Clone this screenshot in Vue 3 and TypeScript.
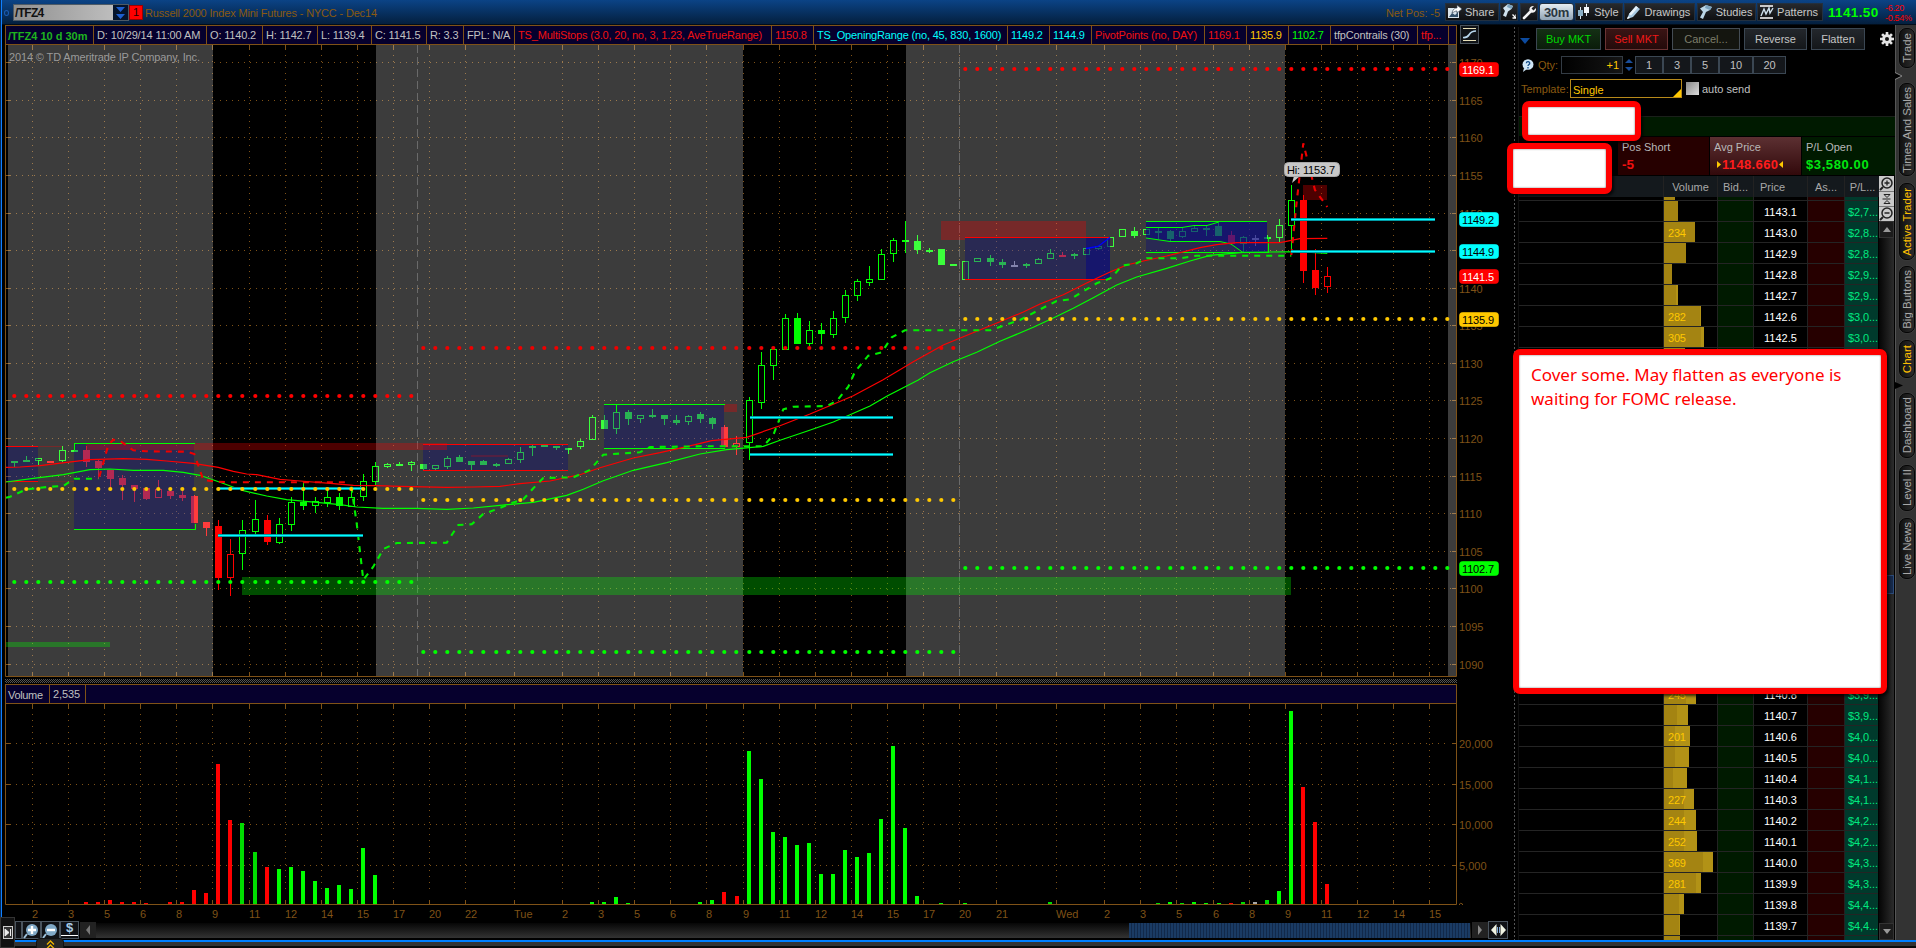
<script setup lang="ts">
type Kind = 'g' | 'G' | 'r' | 'R' | 'n'
interface Candle { x: number; h: number; t: number; b: number; l: number; hollow: boolean; color: string }

// Lower case = filled, upper case = hollow, n = neutral. Vertical values are thirds of a pixel from the base.
const COLORS: Record<Kind, string> = { g: '#00ff00', G: '#00ff00', r: '#ff0000', R: '#ff0000', n: '#a8a8a8' }
const third = (base: number, v: number) => Math.round(base + v / 3)
function parse(base: number, src: string): Candle[] {
  return src.split('|').map((row) => {
    const [x, h, t, b, l, k] = row.trim().split(' ')
    return {
      x: +x, h: third(base, +h), t: third(base, +t), b: third(base, +b), l: third(base, +l),
      hollow: k === 'G' || k === 'R', color: COLORS[k as Kind],
    }
  })
}
const candles: Candle[] = [
  ...parse(380, '14 243 243 249 261 g|26 228 240 246 246 g|38 234 234 243 255 G|50 243 243 249 249 r|62 198 210 243 246 G|74 198 210 216 216 g|86 198 210 246 261 r|98 240 243 264 297 r|110 270 270 297 327 r|122 285 294 315 360 r|134 315 315 327 366 r|146 324 324 357 360 r|158 300 327 354 354 R|170 333 333 348 357 r|182 333 345 354 363 r|194 345 348 429 429 r|206 426 426 444 468 r|218 420 438 594 630 r|230 477 522 595 648 R|242 420 450 522 570 G|255 360 417 456 465 G|267 405 420 486 495 r|279 414 432 489 492 G|291 351 366 435 453 G|303 306 366 378 390 g|315 351 363 378 399 G|327 324 351 369 381 G|339 339 351 378 390 g|351 321 351 381 381 G|363 282 303 351 363 G|375 246 258 306 315 G|387 249 252 261 264 G|399 246 252 258 258 g|411 243 246 255 273 G|423 252 252 267 270 g|435 255 255 267 270 G|447 228 234 262 267 G|459 225 231 246 246 g|471 243 243 255 270 g|483 240 243 255 255 g|496 249 252 258 261 g'),
  ...parse(380, '508 234 237 252 252 G|520 201 216 240 249 G|532 195 198 204 228 g|544 195 195 201 201 g|556 198 198 204 210 g|568 204 204 210 222 g|580 177 183 201 207 G|592 105 111 180 180 G|604 105 120 147 147 g|616 75 96 147 162 G|628 90 96 117 135 g|640 105 105 117 129 G|652 87 105 111 114 g|664 105 105 117 135 g|676 105 120 129 135 g|688 105 108 126 135 G|700 96 102 117 129 g|712 111 114 132 147 g|724 135 141 201 201 r|736 168 189 201 225 R|749 51 60 189 240 G'),
  ...parse(200, '761 456 495 609 627 G|773 447 447 498 540 G|785 342 354 450 450 G|797 339 354 432 432 g|809 363 390 432 438 G|821 369 390 402 432 g|833 333 354 405 414 G|845 270 285 354 369 G|857 237 243 288 303 G|869 198 237 249 258 G|881 147 162 240 240 G|893 114 120 162 186 G|905 63 120 126 159 g|917 105 123 150 162 g|929 144 150 156 159 g|941 147 147 195 195 g|953 192 192 198 198 g|965 183 183 240 240 G|977 174 174 186 186 G|990 165 174 186 198 g|1002 177 186 195 204 g|1014 183 195 201 201 n|1026 189 192 198 204 g|1038 174 177 192 192 G|1050 147 159 177 177 G|1062 156 165 171 171 r|1074 159 162 168 177 g|1086 144 144 165 165 G|1098 138 138 147 150 G|1110 111 111 141 141 G|1122 87 87 111 111 G|1134 81 93 108 114 g'),
  ...parse(130, '1146 297 297 315 315 G|1158 291 303 309 327 g|1170 300 303 327 333 g|1182 291 303 320 324 G|1194 285 294 306 306 G|1206 285 294 300 318 g|1218 279 288 318 318 g|1231 303 315 342 345 r|1243 318 321 342 366 G|1255 315 324 330 348 n|1267 315 321 327 327 g|1279 267 285 324 336 G|1291 165 210 288 375 G|1303 195 210 423 459 r|1315 357 420 474 495 r|1327 411 438 471 489 R'),
]

const line = (segs: [number, number, string][]) =>
  segs.map(([ox, oy, s]) => s.trim().split(' ').map((p) => {
    const [x, y] = p.split(',').map(Number)
    return `${(ox + x / 3).toFixed(1)},${(oy + y / 3).toFixed(1)}`
  }).join(' ')).join(' ')

const redAvg = line([
  [0, 380, '18,262 60,261 120,257 200,247 270,239 370,236 440,238 500,243 580,250 655,262 700,274 740,282 770,284 840,298 900,303 1000,311 1060,316 1130,317 1200,319 1340,322 1420,321 1500,319'],
  [500, 380, '60,311 150,303 240,284 300,263 400,234 480,218 560,200 635,182 740,172 840,137 930,102 1000,73 1060,47 1148,0'],
  [700, 200, '640,485 730,435 830,394 900,365 970,336 1020,312 1090,284 1160,249 1230,216 1280,195 1330,183 1400,168 1500,143'],
  [1100, 130, '350,344 410,338 540,338 600,326 682,325'],
])
const greenAvg = line([
  [0, 380, '18,306 100,295 190,284 270,269 330,267 400,271 490,271 550,277 600,286 660,307 730,332 800,348 860,359 950,367 1020,374 1070,381 1150,385 1250,385 1340,388 1420,384 1500,376'],
  [500, 380, '100,367 200,346 250,328 310,302 400,271 500,248 600,222 680,209 790,199 840,181 920,154 1000,126 1050,104 1110,78 1160,49 1255,0'],
  [700, 200, '690,518 760,485 830,457 900,424 1000,382 1060,354 1120,325 1180,293 1250,255 1310,231 1400,205'],
  [1100, 130, '270,393 330,376 430,367 600,365 682,370'],
])
const greenStops = [
  line([[0, 380, '18,353 30,350 80,328 150,320 190,318 223,296 295,296']]),
  line([
    [0, 380, '1054,320 1070,430 1090,600 1120,560 1150,507 1190,489 1340,488 1375,435 1415,433 1450,402 1500,384'],
    [500, 380, '35,369 70,358 100,325 130,294 220,292 270,270 310,224 420,217 450,201 600,199 790,199 820,165 850,88 880,80 980,78'],
    [700, 200, '410,603 445,560 465,515 505,467 545,457 575,412 615,391 870,391 960,360 1030,323 1070,303 1110,298 1190,250 1235,233 1265,197 1310,190'],
    [1100, 130, '140,385 240,385 290,377 574,377'],
  ]),
]
const redStops = [
  line([[0, 380, '298,290 325,195 340,179 360,182 400,211 440,214 560,215 583,222 610,300 655,305 690,307 1050,307']]),
  line([[1100, 130, '574,375 590,215 610,40 645,180 682,231']]),
]

const timeAxis: [number, string][] = [
  [32, '2'], [68, '3'], [104, '5'], [140, '6'], [176, '8'], [212, '9'], [249, '11'], [285, '12'], [321, '14'], [357, '15'], [393, '17'], [429, '20'], [465, '22'],
  [514, 'Tue'], [562, '2'], [598, '3'], [634, '5'], [670, '6'], [706, '8'], [743, '9'], [779, '11'], [815, '12'], [851, '14'], [887, '15'], [923, '17'], [959, '20'], [996, '21'],
  [1056, 'Wed'], [1104, '2'], [1140, '3'], [1176, '5'], [1213, '6'], [1249, '8'], [1285, '9'], [1321, '11'], [1357, '12'], [1393, '14'], [1429, '15'],
]
const priceAxis: [number, number][] = [[62, 1170], [100, 1165], [137, 1160], [175, 1155], [213, 1150], [250, 1145], [288, 1140], [325, 1135], [363, 1130], [400, 1125], [438, 1120], [476, 1115], [513, 1110], [551, 1105], [588, 1100], [626, 1095], [664, 1090]]
const volAxis: [number, string][] = [[743, '20,000'], [784, '15,000'], [824, '10,000'], [865, '5,000']]
const tags: [number, string, string, string][] = [
  [62, '1169.1', '#ff0000', '#fff'], [212, '1149.2', '#00ffff', '#000'], [244, '1144.9', '#00ffff', '#000'],
  [269, '1141.5', '#ff0000', '#fff'], [312, '1135.9', '#ffc800', '#000'], [561, '1102.7', '#00ff00', '#000'],
]

const slots = candles.map((c) => c.x).concat([1339, 1351, 1363, 1375, 1387, 1399, 1411, 1423, 1435, 1447])
const pivots = ([
  [14, 411, 396, '#ff0000'], [423, 953, 348, '#f00000'], [965, 1447, 69, '#ff0000'],
  [14, 411, 489, '#ffc800'], [423, 953, 500, '#ffc800'], [965, 1447, 319, '#ffc800'],
  [14, 411, 582, '#00ff00'], [423, 953, 652, '#00ff00'], [965, 1447, 568, '#00ff00'],
] as [number, number, number, string][]).flatMap(([a, b, y, color]) => slots.filter((x) => x >= a && x <= b).map((x) => ({ x, y, color })))

const volumes = '86 696 r|98 696 r|110 690 r|122 696 r|134 696 r|146 699 r|170 696 r|182 696 r|194 660 r|206 669 r|218 282 r|230 450 r|242 459 d|255 546 d|267 591 r|279 597 g|291 591 g|303 603 g|315 633 g|327 654 g|339 645 g|351 657 g|363 534 g|375 615 g|592 696 g|604 696 g|616 681 g|628 699 g|700 696 g|712 690 g|724 666 r|737 678 r|749 243 g|761 327 g|773 486 g|785 501 g|797 525 g|809 519 g|821 612 g|833 612 g|845 540 g|857 561 g|869 549 g|881 447 g|893 228 g|905 474 g|917 678 g|941 699 g|965 699 g|1050 696 d|1158 699 d|1170 696 g|1182 699 d|1194 696 g|1206 699 g|1219 699 g|1231 699 r|1243 696 d|1255 696 n|1267 690 d|1279 663 g|1291 123 g|1303 351 r|1315 456 r|1327 642 r'
  .split('|').map((s) => {
    const [x, v, k] = s.split(' ')
    const y = third(670, +v)
    return { x: +x - 2, y, h: 904 - y, color: ({ r: '#ff0000', g: '#00ff00', d: '#00dc00', n: '#a8a8a8' } as Record<string, string>)[k] }
  })

const status: [number, string, string][] = [
  [88, '/TFZ4 10 d 30m', 'sym'], [113, 'D: 10/29/14 11:00 AM', 'date'], [56, 'O: 1140.2', ''], [55, 'H: 1142.7', ''], [54, 'L: 1139.4', ''], [55, 'C: 1141.5', ''], [37, 'R: 3.3', ''], [51, 'FPL: N/A', ''],
  [257, 'TS_MultiStops (3.0, 20, no, 3, 1.23, AveTrueRange)', 'red low'], [42, '1150.8', 'red'], [194, 'TS_OpeningRange (no, 45, 830, 1600)', 'cyan low'], [42, '1149.2', 'cyan'], [42, '1144.9', 'cyan'],
  [113, 'PivotPoints (no, DAY)', 'red low'], [42, '1169.1', 'red'], [42, '1135.9', 'gold'], [42, '1102.7', 'lime'], [87, 'tfpContrails (30)', 'low'], [31, 'tfp...', 'red low'],
]

// The first and last rungs only show a sliver of their volume bar.
const rungVolumes: Record<string, [number, number, string?]> = {
  '1143.2': [11, 0], '1143.1': [14, 0], '1143.0': [31, 0, '234'], '1142.9': [22, 0], '1142.8': [8, 0], '1142.7': [14, 2], '1142.6': [37, 1, '282'], '1142.5': [40, 3, '305'], '1142.4': [21, 0],
  '1140.8': [32, 10, '245'], '1140.7': [24, 11], '1140.6': [26, 15, '201'], '1140.5': [25, 14], '1140.4': [23, 14], '1140.3': [30, 10, '227'], '1140.2': [32, 12, '244'], '1140.1': [33, 13, '252'],
  '1140.0': [49, 10, '369'], '1139.9': [37, 5, '281'], '1139.8': [20, 5], '1139.7': [16, 1], '1139.6': [16, 0],
}
const rungs = Array.from({ length: 37 }, (_, i) => {
  const price = (1143.2 - i / 10).toFixed(1)
  const [w, hi, label] = rungVolumes[price] ?? [24, 8]
  const pl = String(Math.round((1148.66 - +price) * 500))
  const edge = i === 0 || i === 36
  return { key: price, price: edge ? '' : price, w, hi, label, pl: edge ? '' : `$${pl[0]},${pl[1]}...` }
})

const sideTabs: { label: string; h: number; gap: number; on?: boolean }[] = [
  { label: 'Trade', h: 40, gap: 3 }, { label: 'Times And Sales', h: 93, gap: 15 }, { label: 'Active Trader', h: 77, gap: 7, on: true },
  { label: 'Big Buttons', h: 67, gap: 6 }, { label: 'Chart', h: 38, gap: 7, on: true }, { label: 'Dashboard', h: 65, gap: 15 },
  { label: 'Level II', h: 46, gap: 7 }, { label: 'Live News', h: 61, gap: 7 },
]
</script>

<template>
  <div class="app">
    <header class="topbar">
      <span class="ring"></span>
      <div class="symbol"><b>/TFZ4</b><i class="drop"><svg width="11" height="14"><path d="M1 1h9L5.5 6zM1 8h9L5.5 13z" fill="#1d5fd0" /></svg></i></div>
      <span class="link">1</span>
      <span class="desc">Russell 2000 Index Mini Futures - NYCC - Dec14</span>
      <span class="netpos">Net Pos: -5</span>
      <div class="tools">
        <div class="tool" style="width: 54px"><svg width="15" height="14"><rect x="1" y="3" width="11" height="10" fill="#d9e4ec" /><path d="M2 12l3-4 3 2 3-3v5z" fill="#33506a" /><path d="M5 8c1-4 3-5 5-5V0l5 4-5 4V6C8 6 7 7 5 8z" fill="#fff" stroke="#345" stroke-width=".7" /></svg>Share</div>
        <div class="tool" style="width: 18px"><svg width="15" height="16"><path d="M1 4L6 0l5 2-1.500 3L6 7.500 4 13l-3-1.500L3 7z" fill="#cfe1ee" /><path d="M6 0l5 2-1.500 3L5 3z" fill="#7ba2bd" /><path d="M10.500 10.500l3.500 3.500M14 10.500V14h-3.500" stroke="#fff" stroke-width="1.300" fill="none" /></svg></div>
        <div class="tool" style="width: 18px"><svg width="15" height="15"><path d="M2 13l6-6" stroke="#f2f2f2" stroke-width="2.6" stroke-linecap="round" /><path d="M12 1L9.500 3.500 11.500 5.500 14 3c.6 3-2 5.500-5 4.500C5.500 5 8 .4 12 1z" fill="#f2f2f2" /></svg></div>
        <div class="tool period" style="width: 35px"><b>30m</b></div>
        <div class="tool" style="width: 48px"><svg width="14" height="16"><path d="M3.500 3v12M9.500 0v12" stroke="#dbe6ee" /><rect x="1" y="6" width="5" height="6" fill="#8bb0c7" /><rect x="7" y="3" width="5" height="6" fill="#f3f7fa" /></svg>Style</div>
        <div class="tool" style="width: 71px"><svg width="15" height="15"><path d="M1 14l2-5L10 1l4 3-7 8z" fill="#a9cbe3" /><path d="M3 9L10 1l2 1.500-7 8z" fill="#e8f3fa" /><path d="M1 14l1-2.500 2 1.500z" fill="#fff" /></svg>Drawings</div>
        <div class="tool" style="width: 59px"><svg width="14" height="16"><path d="M1 4.500L7 1l6 2-2 3-4 2-3 7-3-1.500L4 8z" fill="#b9d4e5" /><path d="M7 1l6 2-2 3-5-2z" fill="#7ba2bd" /></svg>Studies</div>
        <div class="tool" style="width: 66px"><svg width="15" height="14"><path d="M1 1h13M1 13h13" stroke="#fff" stroke-width="1.500" /><path d="M2 11l3-7 2 5 3-6 1 5 3-5" stroke="#cfe0ec" fill="none" stroke-width="1.400" /></svg>Patterns</div>
      </div>
      <b class="last">1141.50</b>
      <span class="chg"><i>-6.20</i><i>-0.54%</i></span>
    </header>

    <main class="body">
      <section class="chart">
        <div class="strip">
          <span v-for="(s, i) in status" :key="i" class="cell" :class="s[2]" :style="{ width: s[0] + 'px' }">{{ s[1] }}</span>
        </div>
        <svg class="plot" width="1514" height="877" viewBox="0 45 1514 877">
          <defs>
            <pattern id="mesh" width="2" height="2" patternUnits="userSpaceOnUse"><rect width="1" height="1" fill="#555" /><rect x="1" y="1" width="1" height="1" fill="#555" /></pattern>
          </defs>
          <g class="grid">
            <path v-for="t in timeAxis" :key="'v' + t[0]" :d="`M${t[0] + .5} 55V672`" stroke-dasharray="1 5" />
            <path v-for="p in priceAxis" :key="'h' + p[0]" :d="`M10 ${p[0] + .5}H1452`" stroke-dasharray="1 5" />
            <path v-for="t in timeAxis" :key="'vt' + t[0]" :d="`M${t[0] + .5} 45v5M${t[0] + .5} 672v4`" />
            <path v-for="p in priceAxis" :key="'ht' + p[0]" :d="`M6 ${p[0] + .5}h5M1452 ${p[0] + .5}h4`" />
          </g>
          <g class="crisp">
            <g v-for="c in candles" :key="c.x" :fill="c.color">
              <rect v-if="c.t > c.h" :x="c.x" :y="c.h" width="1" :height="c.t - c.h" />
              <rect v-if="c.l > c.b" :x="c.x" :y="c.b" width="1" :height="c.l - c.b" />
              <rect v-if="c.hollow" :x="c.x - 2.5" :y="c.t + .5" width="6" :height="Math.max(1, c.b - c.t - 1)" fill="none" :stroke="c.color" />
              <rect v-else :x="c.x - 3" :y="c.t" width="7" :height="c.b - c.t" />
            </g>
            <g fill="rgba(255,255,255,.235)">
              <rect x="8" y="45" width="205" height="631" /><rect x="376" y="45" width="367" height="631" />
              <rect x="906" y="45" width="379" height="631" /><rect x="1448" y="45" width="8" height="631" />
            </g>
            <path d="M417.500 45V676M959.500 45V676" stroke="#6a6a6a" stroke-dasharray="8 4" fill="none" />
            <g fill="rgba(0,0,139,.3)">
              <rect x="6" y="446" width="32" height="36" /><rect x="74" y="443" width="120" height="86" /><rect x="423" y="444" width="145" height="27" />
              <rect x="604" y="404" width="120" height="45" /><rect x="965" y="237" width="145" height="43" /><rect x="1086" y="237" width="24" height="43" fill="rgba(0,0,139,.45)" />
              <rect x="1146" y="221" width="121" height="31" /><path d="M1146 221h121v31h-24l-12-8-11-3h-50l-24-3z" fill="rgba(0,0,139,.45)" />
            </g>
            <g fill="rgba(255,0,0,.3)">
              <rect x="86" y="443" width="361" height="7" /><rect x="471" y="455" width="37" height="2" fill="rgba(255,0,0,.2)" /><rect x="724" y="404" width="13" height="8" />
              <rect x="941" y="221" width="145" height="16" /><rect x="941" y="237" width="24" height="3" /><rect x="1303" y="185" width="24" height="15" /><rect x="38" y="446" width="24" height="1" />
              <rect x="38" y="481" width="36" height="1" opacity=".6" />
            </g>
            <g fill="rgba(0,255,0,.3)"><rect x="242" y="577" width="1049" height="18" /><rect x="6" y="642" width="104" height="5" /></g>
            <path d="M6 446.500h32M6 481.500h32M423 444.500h145M423 470.500h145M965 237.500h145M965 279.500h145" stroke="#f00" fill="none" />
            <path d="M74.500 451V443.500H195M74 529.500H195V524M604 404.500h121M604 448.500h121M1146 221.500h121M1146 252.500h122v-16M616.500 405v7" stroke="#0f0" fill="none" />
          </g>
          <path d="M1146 227.500h36l12-2h13l12-3.500M1146 238l24 3.500h50l11 2.500 12 8.500" stroke="#0f0" fill="none" />
          <path d="M1086 248.500l12-2 12-9" stroke="#00f" fill="none" stroke-width="1.300" />
          <polyline :points="redAvg" stroke="#f00" class="ma" />
          <polyline :points="greenAvg" stroke="#0f0" class="ma" />
          <polyline v-for="(s, i) in greenStops" :key="'g' + i" :points="s" stroke="#0e0" class="stop" />
          <polyline v-for="(s, i) in redStops" :key="'r' + i" :points="s" stroke="#e00" class="stop" />
          <g class="crisp" fill="none">
            <path v-for="w in 2" :key="w" d="M218 488.500H363M218 535.500H363M750 417.500H893M750 454.500H893M1291 219.500H1435M1291 251.500H1435" :stroke="w === 1 ? '#009aa4' : '#00ffff'" :stroke-width="w === 1 ? 3 : 1" />
          </g>
          <circle v-for="(d, i) in pivots" :key="'p' + i" :cx="d.x + .3" :cy="d.y" r="2.1" :fill="d.color" />
          <text x="9" y="61" fill="#9a9a9a" font-size="10" textLength="191">2014 © TD Ameritrade IP Company, Inc.</text>
          <path d="M1292 183l2-7h6z" fill="#c8c8c8" />
          <rect x="1284.500" y="162.500" width="55" height="14" rx="4" fill="#c8c8c8" stroke="#aaa" />
          <text x="1287" y="174" textLength="48" fill="#000">Hi: 1153.7</text>

          <rect x="5" y="679" width="1452" height="4" fill="url(#mesh)" />
          <rect x="5.500" y="684.500" width="1451" height="19" fill="#06002d" stroke="#7f5217" />
          <path d="M49.500 685v18M85.500 685v18" stroke="#7f5217" />
          <text x="8" y="699" fill="#c0c0c0" textLength="35">Volume</text><text x="53" y="698" fill="#c0c0c0" textLength="27">2,535</text>
          <g class="grid">
            <path v-for="t in timeAxis" :key="'v' + t[0]" :d="`M${t[0] + .5} 714V892`" stroke-dasharray="1 5" />
            <path v-for="t in timeAxis" :key="'b' + t[0]" :d="`M${t[0] + .5} 704v5M${t[0] + .5} 900v4`" />
            <path v-for="v in volAxis" :key="'h' + v[0]" :d="`M10 ${v[0] + .5}H1450`" stroke-dasharray="1 5" />
            <path v-for="v in volAxis" :key="'t' + v[0]" :d="`M6 ${v[0] + .5}h5M1452 ${v[0] + .5}h4`" />
          </g>
          <rect v-for="v in volumes" :key="v.x" :x="v.x" :y="v.y" width="4" :height="v.h" :fill="v.color" class="crisp" />
          <path d="M5.500 45V676.500H1456.500V45M5.500 704V904.500H1456.500V704" fill="none" stroke="#7f5217" />
          <g fill="#7f5217">
            <text v-for="p in priceAxis" :key="p[0]" x="1459" :y="p[0] + 5">{{ p[1] }}</text>
            <text v-for="v in volAxis" :key="v[0]" x="1459" :y="v[0] + 5">{{ v[1] }}</text>
            <text v-for="t in timeAxis" :key="t[0]" :x="t[0]" y="918">{{ t[1] }}</text>
            <path d="M1459.500 905v-1q1-1.500 3 0v1" stroke="#7f5217" fill="none" />
          </g>
          <g v-for="t in tags" :key="t[0]">
            <rect x="1459.500" :y="t[0] + .5" width="39" height="14" rx="3" :fill="t[2]" :stroke="t[2]" stroke-opacity=".6" />
            <text x="1462" :y="t[0] + 11.500" :fill="t[3]" textLength="32">{{ t[1] }}</text>
          </g>
        </svg>
        <div class="scroller">
          <i class="zb part"></i>
          <i class="zb"><svg width="17" height="17"><circle cx="9" cy="8" r="6" fill="#7fa8c6" /><path d="M4 12l-3 4" stroke="#9cc0da" stroke-width="2" /><path d="M9 4v8M5 8h8" stroke="#fff" stroke-width="2.400" /></svg></i>
          <i class="zb"><svg width="17" height="17"><circle cx="9" cy="8" r="6" fill="#7fa8c6" /><path d="M4 12l-3 4" stroke="#9cc0da" stroke-width="2" /><path d="M5 8h8" stroke="#fff" stroke-width="2.400" /></svg></i>
          <i class="zb dollar">$</i>
          <i class="arrow"><svg width="6" height="10"><path d="M5 0v10L1 5z" fill="#777" /></svg></i>
          <div class="track"><div class="thumb"></div></div>
          <i class="arrow"><svg width="6" height="10"><path d="M1 0v10L5 5z" fill="#888" /></svg></i>
          <i class="zb last-btn"><svg width="15" height="13"><path d="M5.500 0v12L0 6zM9.500 0v12L15 6z" fill="#f0f4e4" /><path d="M6.500 3v6M8.500 3v6" stroke="#7fa8d6" /></svg></i>
        </div>
        <svg class="study" width="19" height="19"><rect x=".5" y=".5" width="18" height="18" fill="#101317" stroke="#4a535c" /><path d="M3 3.500h13M3 15.500h13" stroke="#e8e0b8" /><path d="M3 12.500c8 1 4-6.500 13-6.500" stroke="#b8d8ee" stroke-width="1.700" fill="none" /></svg>
      </section>

      <div class="split"></div>

      <section class="trader">
        <div class="row orders">
          <svg width="10" height="6" class="tri"><path d="M0 0h10L5 6z" fill="#0c4a9e" /></svg>
          <span class="btn buy" style="width: 65px">Buy MKT</span><span class="btn sell" style="width: 63px">Sell MKT</span><span class="btn cancel" style="width: 68px">Cancel...</span>
          <span class="btn" style="width: 63px">Reverse</span><span class="btn" style="width: 54px">Flatten</span>
          <svg class="gear" width="14" height="14" viewBox="-7 -7 14 14"><g fill="#e4e4e4"><circle r="4.800" /><rect v-for="a in 4" :key="a" x="-1.300" y="-7" width="2.600" height="14" :transform="`rotate(${a * 45})`" /></g><circle r="2" fill="#111" /></svg>
        </div>
        <div class="row qty">
          <svg width="12" height="13"><ellipse cx="6" cy="5.500" rx="5.500" ry="5.300" fill="#cfe6f6" /><path d="M2 9l-1 4 4-3z" fill="#cfe6f6" /><path d="M4.300 4.300C4.500 2 8 2.300 7.700 4.500 7.500 5.500 6 5.500 6 7M6 8v1.500" stroke="#134b86" stroke-width="1.300" fill="none" /></svg>
          <label>Qty:</label>
          <div class="amount">+1</div>
          <svg class="spin" width="12" height="18"><path d="M2 7h8L6 3zM2 11h8L6 15z" fill="#1a4f9c" /></svg>
          <span class="q" style="width: 28px">1</span><span class="q" style="width: 28px">3</span><span class="q" style="width: 28px">5</span><span class="q" style="width: 34px">10</span><span class="q" style="width: 33px">20</span>
        </div>
        <div class="row template"><label>Template:</label><div class="select">Single<svg width="8" height="8"><path d="M8 0v8H0z" fill="#ffc800" /></svg></div><i class="check"></i><span>auto send</span></div>
        <div class="acct"></div>
        <div class="stats">
          <div class="stat none"></div>
          <div class="stat short"><span>Pos Short</span><b>-5</b></div>
          <div class="stat avg"><span>Avg Price</span><b><svg width="4" height="7"><path d="M0 0v7l4-3.500z" fill="#ffc800" /></svg>1148.660<svg width="4" height="7"><path d="M4 0v7L0 3.500z" fill="#ffc800" /></svg></b></div>
          <div class="stat pl"><span>P/L Open</span><b>$3,580.00</b></div>
        </div>
        <div class="book">
          <div class="ladder">
            <div class="lr head"><i></i><span>Volume</span><span>Bid...</span><span>Price</span><span>As...</span><span>P/L...</span></div>
            <div class="rows">
              <div v-for="r in rungs" :key="r.key" class="lr">
                <i></i>
                <span class="vol"><em :style="{ width: r.w + 'px' }"><s :style="{ width: r.hi + 'px' }"></s></em><u>{{ r.label }}</u></span>
                <span class="bid"></span><span class="price">{{ r.price }}</span><span class="ask"></span><span class="pnl">{{ r.pl }}</span>
              </div>
            </div>
          </div>
          <div class="vscroll">
            <svg width="15" height="45"><rect width="15" height="45" fill="#c9c9c9" /><path d="M0 15.500h15M0 30.500h15" stroke="#777" /><g fill="none" stroke="#222"><circle cx="8" cy="7" r="5" stroke-width="1.500" /><path d="M5.500 7h5M8 4.500v5" stroke-width="1.300" /><path d="M4 11l-3 3M4 41l-3 3" stroke-width="2" /><circle cx="8" cy="37" r="5" stroke-width="1.500" /><path d="M5.500 37h5" stroke-width="1.500" /><path d="M3.500 23h8M5 18.500h6l-3 3zM5 27.500h6l-3-3z" /></g></svg>
            <i><svg width="8" height="6"><path d="M0 5h8L4 0z" fill="#999" /></svg></i>
            <div class="vt"></div>
            <i><svg width="8" height="6"><path d="M0 0h8L4 5z" fill="#999" /></svg></i>
          </div>
        </div>
      </section>

      <aside class="side">
        <span v-for="t in sideTabs" :key="t.label" class="tab" :class="{ on: t.on }" :style="{ height: t.h + 'px', marginTop: t.gap + 'px' }"><span>{{ t.label }}</span></span>
        <svg class="notch" width="9" height="320"><path d="M0 1.500l7 3.500-7 3.500" fill="#000" stroke="#888" /><path d="M0 311l8 3.500-8 3.500z" fill="#000" /></svg>
      </aside>
    </main>

    <footer class="foot"></footer>
    <i class="edge"></i>
    <div class="dock"><svg width="10" height="13"><rect x=".5" y=".5" width="9" height="12" fill="#333" stroke="#ccc" /><path d="M2 3v7l4-3.500zM7.500 3v7" fill="#eee" stroke="#eee" /></svg></div>
    <div class="pull"><svg width="9" height="9"><path d="M1 4.500L4.500 1 8 4.500M1 8.500L4.500 5 8 8.500" fill="none" stroke="#f0b400" stroke-width="1.300" /></svg></div>
    <div class="mask acc-a"></div>
    <div class="mask acc-b"></div>
    <div class="mask note"><p>Cover some. May flatten as everyone is</p><p>waiting for FOMC release.</p></div>
  </div>
</template>

<style>
html, body { margin: 0; background: #000; overflow: hidden; }
</style>

<style scoped>
* { box-sizing: border-box; }
i, em, u, s { font-style: normal; text-decoration: none; }
.app { position: relative; width: 1916px; height: 948px; background: #000; overflow: hidden; display: flex; flex-direction: column; font: 11px "Liberation Sans", Arial, sans-serif; color: #c0c0c0; white-space: nowrap; }
.topbar { flex: none; height: 25px; display: flex; align-items: center; background: linear-gradient(#0b4386, #04203f 95%, #000); }
.ring { width: 5px; height: 6px; margin-left: 4px; border: 1px solid #1a5cb4; border-radius: 50%; margin-right: 4px; }
.symbol { width: 116px; height: 17px; border: 1px solid #4d5a66; display: flex; justify-content: space-between; background: linear-gradient(90deg, #909090, #c4c4c4); color: #111; line-height: 16px; padding-left: 1px; font-size: 12px; }
.symbol b { letter-spacing: -.7px; }
.drop { width: 15px; background: #04142c; padding: 1px 2px; line-height: 0; }
.link { width: 14px; height: 15px; background: #f00; border: 1px solid #900; color: #200; text-align: center; line-height: 13px; }
.desc { color: #8a5a10; margin-left: 2px; width: 245px; letter-spacing: -.17px; }
.netpos { color: #8a5a10; margin-left: auto; margin-right: 4px; width: 55px; letter-spacing: -.1px; }
.tools { display: flex; height: 18px; gap: 1.300px; width: 379px; margin-top: -1px; }
.tool { display: flex; flex: none; align-items: center; gap: 3px; padding: 0 1px; background: linear-gradient(#26292d, #0e0f11); border: 1px solid #23303f; color: #c8c8c8; }
.period { background: linear-gradient(#e4ecf2, #8fa3b4); color: #2a3640; border-radius: 3px; justify-content: center; font-size: 13px; letter-spacing: -.4px; }
.last { color: #0f0; font-size: 13.500px; width: 57px; margin-left: 4px; letter-spacing: .35px; }
.chg { width: 31px; font-size: 9px; line-height: 10px; color: #f00; display: flex; flex-direction: column; letter-spacing: -.3px; }
.body { flex: none; height: 915px; display: flex; }
.chart { position: relative; width: 1512px; flex: none; }
.strip { display: flex; margin-left: 5px; width: 1452px; height: 20px; background: #06002d; border: 1px solid #7f5217; }
.cell { flex: none; border-right: 1px solid #7f5217; padding-left: 3px; line-height: 18px; color: #c0c0c0; overflow: hidden; letter-spacing: -.17px; }
.date { letter-spacing: -.12px; }
.sym { color: #1fb41f; font-weight: bold; padding-left: 2px; line-height: 20px; letter-spacing: 0; }
.low { line-height: 19px; }
.red { color: #f01010; } .cyan { color: #0ff; } .gold { color: #ffc800; } .lime { color: #0f0; }
.plot { display: block; }
.plot text { font: 11px "Liberation Sans", Arial, sans-serif; }
.grid { fill: none; stroke: #7f5217; shape-rendering: crispEdges; }
.crisp { shape-rendering: crispEdges; }
.ma { fill: none; stroke-width: 1.200; }
.stop { fill: none; stroke-width: 2.100; stroke-dasharray: 6 6; }
.study { position: absolute; left: 1460px; top: 0; }
.scroller { position: absolute; left: 15px; top: 896px; width: 1493px; height: 18px; display: flex; align-items: center; gap: 0; }
.zb { flex: none; width: 19px; height: 18px; background: #101216; border: 1px solid #4a545e; display: flex; justify-content: center; align-items: center; }
.part { width: 7px; }
.dollar { color: #a8cbe6; font-weight: bold; font-size: 13px; line-height: 12px; align-items: flex-start; box-shadow: inset 0 -2px #101216, inset 0 -3px #fff; }
.arrow { flex: none; width: 16px; height: 16px; background: #222; margin: 0 0 0 1px; display: flex; justify-content: center; align-items: center; }
.last-btn { margin-left: 0; width: 20px; }
.track { flex: 1; height: 15px; background: linear-gradient(#060606, #333); display: flex; justify-content: flex-end; padding-right: 1px; }
.thumb { width: 341px; background: repeating-linear-gradient(90deg, #1a3b64 0 2px, #12294a 2px 3px); }
.split { flex: none; width: 7px; margin-top: 2px; height: 913px; background: radial-gradient(circle at 1.500px 1px, #555 .8px, transparent 1px) 1px 0 / 3px 4px repeat-y, #000; border-right: 1px solid #111; }
.trader { width: 376px; flex: none; display: flex; flex-direction: column; }
.row { display: flex; flex: none; align-items: center; }
.orders { height: 22px; margin-top: 3px; gap: 4px; }
.tri { margin: 3px 2px 0 1px; }
.btn { height: 22px; line-height: 20px; text-align: center; border: 1px solid #3b4753; background: linear-gradient(#23272c, #14171a); color: #c4c4c4; flex: none; }
.buy { color: #00d800; background: linear-gradient(#143014, #0a1c0a); }
.sell { color: #f01818; background: linear-gradient(#3a1414, #240a0a); border-color: #6b3434; }
.cancel { color: #7d7d6a; background: #14150f; border-color: #444c54; }
.gear { margin-left: 11px; margin-top: 0; }
.qty { margin-top: 6px; height: 18px; padding-left: 3px; }
label { color: #8a5a10; }
.qty label { margin-left: 4px; width: 23px; }
.amount { width: 62px; height: 18px; border: 1px solid #333b44; background: linear-gradient(90deg, #000, #151515); color: #ffc800; text-align: right; line-height: 17px; padding-right: 3px; }
.q { height: 18px; line-height: 16px; text-align: center; border: 1px solid #3b4753; margin-right: 0; background: #14171b; }
.template { margin-top: 5px; height: 19px; padding-left: 2px; }
.template label { width: 49px; }
.select { position: relative; width: 112px; height: 19px; border: 1px solid #b88a1a; color: #ffc800; padding-left: 2px; line-height: 20px; margin-right: 4px; }
.select svg { position: absolute; right: 0; bottom: 0; }
.check { width: 13px; height: 13px; background: linear-gradient(135deg, #888, #ddd); margin-right: 3px; }
.acct { margin-top: 18px; height: 20px; background: #001a00; flex: none; border-top: 1px solid #1a1f1a; }
.stats { display: flex; margin-top: 1px; height: 38px; flex: none; gap: 1px; }
.stat { padding: 4px 4px 0; width: 91px; height: 38px; line-height: 12px; }
.stat span { display: block; color: #b8b8b8; }
.stat b { font-size: 13.500px; display: flex; align-items: center; margin-top: 5px; height: 13px; }
.none { width: 98px; }
.short { background: #260000; } .short b { color: #f01010; }
.avg { background: linear-gradient(#5c3032, #32090b); } .avg b { color: #ff1c1c; margin-left: 3px; gap: 1px; font-size: 13px; letter-spacing: .35px; }
.pl { background: #001a00; width: 93px; } .pl b { color: #00e810; font-size: 13px; letter-spacing: .6px; }
.book { display: flex; flex: 1; min-height: 0; margin-top: 1px; }
.ladder { width: 359px; display: flex; flex-direction: column; }
.lr { display: grid; grid-template-columns: 144px 53px 35px 53px 36px 35px; gap: 0 1px; height: 21px; flex: none; border-bottom: 1px solid #242424; padding-left: 0; width: 361px; margin-right: -2px; }
.lr > * { overflow: hidden; line-height: 22px; border-left: 0; box-shadow: -1px 0 #222; }
.head { height: 21px; border: 0; color: #a8a8a8; background: #14191d; }
.head span { text-align: center; line-height: 22px; }
.head span:nth-child(4) { text-align: left; padding-left: 6px; }
.rows { flex: 1; overflow: hidden; min-height: 0; margin-top: -17px; clip-path: inset(17px 0 0 0); display: flex; flex-direction: column; }
.vol { position: relative; }
.vol em { display: flex; justify-content: flex-end; height: 20px; background: #a48412; }
.vol s { background: #b29216; }
.vol u { position: absolute; left: 4px; top: 0; color: #ffc800; letter-spacing: -.2px; }
.bid { background: #001a00; }
.price { color: #fff; padding-left: 10px; }
.ask { background: #260000; }
.pnl { background: #003a2c; color: #00e880; padding-left: 3px; letter-spacing: -.1px; }
.vscroll { width: 15px; margin-left: auto; margin-right: 1px; display: flex; flex-direction: column; line-height: 0; }
.vscroll > i { height: 17px; flex: none; background: #1c1c1c; border: 1px solid #333; display: flex; align-items: center; justify-content: center; }
.vt { flex: 1; background: linear-gradient(90deg, #050505, #2c2c2c); position: relative; }
.vt::after { content: ""; position: absolute; left: 0; right: 0; top: 337px; height: 17px; background: #16294a; border: 1px solid #2c4a78; }
.side { position: relative; width: 21px; flex: none; background: #333; border-left: 1px solid #555; display: flex; flex-direction: column; padding-left: 3px; }
.tab { flex: none; width: 16px; background: linear-gradient(90deg, #111, #2c2c2c); border: 1px solid #050505; border-radius: 7px; display: flex; align-items: center; justify-content: center; color: #a8a8a8; box-shadow: 0 0 1px #666; }
.tab span { writing-mode: vertical-rl; transform: rotate(180deg); font-size: 11.500px; line-height: 14px; }
.on { color: #ffc000; }
.notch { position: absolute; left: -1px; top: 46px; overflow: visible; }
.foot { height: 8px; flex: none; background: linear-gradient(#007fff 0 2px, #333 2px 6px, #0a0a0a 6px); }
.edge { position: absolute; left: 1px; top: 0; width: 1px; height: 918px; background: #1080ff; box-shadow: -1px 0 #052a58; }
.dock { position: absolute; left: 0; top: 917px; width: 15px; height: 31px; background: #111; border: 1px solid #333; display: flex; align-items: center; justify-content: center; }
.pull { position: absolute; left: 36px; top: 938px; width: 28px; height: 12px; background: #262626; border: 1px solid #111; border-radius: 4px 4px 0 0; display: flex; justify-content: center; padding-top: 1px; }
.mask { position: absolute; background: #fff; border: 6px solid #f00; border-radius: 7px; box-shadow: 2px 2px 3px rgba(0, 0, 0, .7), inset 0 0 2px rgba(0, 0, 0, .6); }
.acc-a { left: 1522px; top: 101px; width: 119px; height: 40px; }
.acc-b { left: 1507px; top: 143px; width: 105px; height: 51px; }
.note { left: 1513px; top: 349px; width: 374px; height: 345px; padding: 8px 12px; }
.note p { margin: 0; font: 17px/24px "Noto Sans", "Open Sans", sans-serif; color: #f00; }
</style>
